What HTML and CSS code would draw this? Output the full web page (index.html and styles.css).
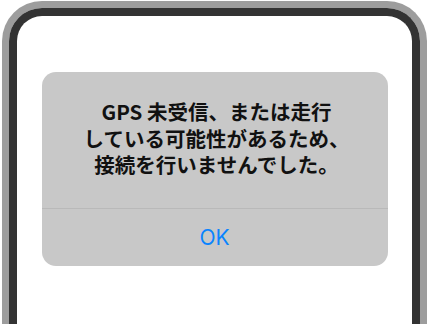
FILE: index.html
```html
<!DOCTYPE html>
<html lang="ja">
<head>
<meta charset="utf-8">
<link rel="stylesheet" href="styles.css">
</head>
<body>
<div class="phone">
  <div class="screen">
    <div class="alert">
      <p class="message">GPS 未受信、または走行<br>している可能性があるため、<br>接続を行いませんでした。</p>
      <div class="actions"><span class="ok">OK</span></div>
    </div>
  </div>
</div>
</body>
</html>
```
FILE: styles.css
```css
html, body {
  margin: 0;
  padding: 0;
  background: #ffffff;
  overflow: hidden;
  height: 324px;
}
.phone {
  margin: 1px 1px 0 2px;
  border: 7px solid #9d9d9d;
  border-bottom: none;
  border-radius: 40px 40px 0 0;
  height: 323px;
  box-sizing: border-box;
}
.screen {
  border: 8px solid #333333;
  border-bottom: none;
  border-radius: 33px 33px 0 0;
  background: #ffffff;
  height: 316px;
  padding-top: 56px;
  box-sizing: border-box;
}
.alert {
  width: 346px;
  margin: 0 auto;
  background: #c8c8c8;
  border-radius: 14px;
  overflow: hidden;
}
.message {
  margin: 0;
  padding: 26px 4px 30px 8px;
  text-align: center;
  font-family: "Noto Sans CJK JP", sans-serif;
  font-weight: 700;
  font-size: 20.5px;
  line-height: 26.5px;
  color: #111111;
  border-bottom: 1px solid #b9b9b9;
}
.actions {
  height: 57px;
  display: flex;
  align-items: center;
  justify-content: center;
}
.ok {
  font-family: "Inter", "Noto Sans", sans-serif;
  font-size: 21px;
  color: #0a84ff;
}
```
